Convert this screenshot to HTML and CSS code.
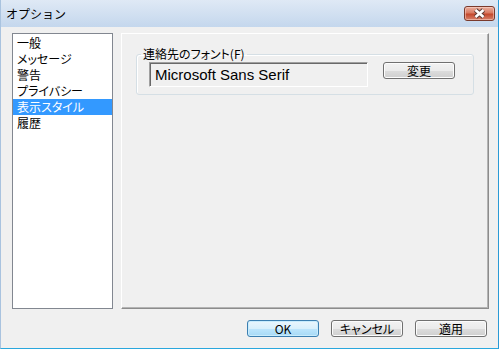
FILE: index.html
```html
<!DOCTYPE html>
<html lang="ja">
<head>
<meta charset="utf-8">
<title>オプション</title>
<link rel="stylesheet" href="styles.css">
</head>
<body>
<div class="window">

  <div class="titlebar">
    <span class="title">オプション</span>
    <button class="close" type="button">
      <svg width="13" height="11" viewBox="0 0 13 11">
        <path d="M2.5 2 L10.5 9 M10.5 2 L2.5 9" stroke="#5a3a34" stroke-width="4.6" fill="none"/>
        <path d="M2.5 2 L10.5 9 M10.5 2 L2.5 9" stroke="#fff" stroke-width="2.6" fill="none"/>
      </svg>
    </button>
  </div>

  <div class="body">
    <div class="main">
      <ul class="list">
        <li>一般</li>
        <li>メッセージ</li>
        <li>警告</li>
        <li>プライバシー</li>
        <li class="selected">表示スタイル</li>
        <li>履歴</li>
      </ul>

      <div class="panel">
        <fieldset class="group">
          <legend>連絡先のフォント(F)</legend>
          <div class="font-row">
            <div class="font-field">Microsoft Sans Serif</div>
            <button class="btn" type="button">変更</button>
          </div>
        </fieldset>
      </div>
    </div>

    <div class="footer">
      <button class="btn default" type="button">OK</button>
      <button class="btn" type="button">キャンセル</button>
      <button class="btn" type="button">適用</button>
    </div>
  </div>

</div>
</body>
</html>
```

FILE: styles.css
```css
body {
  margin: 0;
  font-family: "Noto Sans CJK JP", "Liberation Sans", sans-serif;
  font-size: 12px;
  color: #000;
}
.window {
  width: 499px;
  height: 349px;
  box-sizing: border-box;
  display: flex;
  flex-direction: column;
  border-left: 1px solid #a9c3df;
  border-right: 1px solid #2a9ad6;
  border-bottom: 1px solid #2aa7dd;
}
.titlebar {
  height: 27px;
  flex: none;
  display: flex;
  align-items: center;
  justify-content: space-between;
  padding: 0 3px 0 5px;
  background: linear-gradient(#dfe9f5, #c4d7ed);
}
.title {
  font-size: 12px;
  line-height: 14px;
}
.close {
  width: 31px;
  height: 15px;
  padding: 0;
  display: flex;
  align-items: center;
  justify-content: center;
  border: 1px solid #7a3a2c;
  border-radius: 3px;
  background: linear-gradient(#eab0a0, #d97a62 45%, #c4482c 55%, #d6826c);
  box-shadow: inset 0 0 0 1px rgba(255, 220, 210, 0.5);
}
.body {
  flex: 1;
  display: flex;
  flex-direction: column;
  background: #f0f0f0;
  padding: 6px 9px 0 11px;
}
.main {
  flex: 1;
  display: flex;
  gap: 8px;
  min-height: 0;
}
.list {
  width: 101px;
  box-sizing: border-box;
  margin: 0;
  padding: 1px 0 0;
  list-style: none;
  background: #fff;
  border: 1px solid #828790;
}
.list li {
  height: 16px;
  line-height: 16px;
  padding-left: 4px;
  font-feature-settings: "palt";
}
.list li.selected {
  background: #3399ff;
  color: #fff;
}
.panel {
  flex: 1;
  border: 1px solid;
  border-color: #fff #8c8c8c #8c8c8c #fff;
  box-shadow: inset -1px -1px 0 #b4b4b4;
  padding: 13px 14px 0;
}
.group {
  margin: 0;
  border: 1px solid #d5dfe5;
  border-radius: 3px;
  padding: 1px 17px 7px 12px;
  box-shadow: inset 1px 1px 0 #fff;
}
.group legend {
  padding: 0 2px;
  margin-left: -8px;
  line-height: 14px;
  font-feature-settings: "palt";
}
.font-row {
  display: flex;
  align-items: flex-start;
  gap: 15px;
}
.font-field {
  width: 219px;
  height: 25px;
  box-sizing: border-box;
  padding-left: 5px;
  border: 1px solid;
  border-color: #a0a0a0 #fff #fff #a0a0a0;
  box-shadow: inset 1px 1px 0 #696969;
  background: #f0f0f0;
  font-family: "Liberation Sans", Arial, sans-serif;
  font-size: 15px;
  line-height: 24px;
  white-space: nowrap;
}
.btn {
  width: 72px;
  height: 17px;
  box-sizing: border-box;
  padding: 0;
  border: 1px solid #707070;
  border-radius: 3px;
  background: linear-gradient(#f2f2f2, #ebebeb 50%, #dddddd 50%, #cfcfcf);
  box-shadow: inset 0 0 0 1px #fcfcfc;
  font-family: "Noto Sans CJK JP", "Liberation Sans", sans-serif;
  font-size: 12px;
  line-height: 14px;
  color: #000;
  font-feature-settings: "palt";
}
.btn.default {
  border-color: #3c7fb1;
  background: linear-gradient(#eaf6fd, #d9f0fc 50%, #bee6fd 50%, #a7d9f5);
  box-shadow: inset 0 0 0 1px #c8ecfd;
}
.footer {
  flex: none;
  display: flex;
  justify-content: flex-end;
  gap: 12px;
  padding: 11px 2px 11px 0;
}
```
